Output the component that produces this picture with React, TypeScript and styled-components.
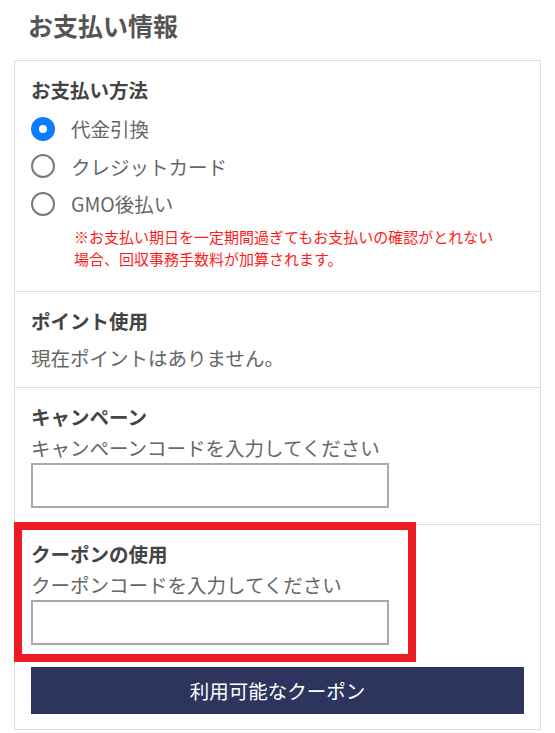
import React, { useState } from 'react';
import styled, { createGlobalStyle } from 'styled-components';

const GlobalStyle = createGlobalStyle`
    body {
        margin: 0;
        background: #ffffff;
        font-family: "Noto Sans CJK JP", "Noto Sans", sans-serif;
    }
`;

const methods = ['代金引換', 'クレジットカード', 'GMO後払い'];

export default function App() {
    const [method, setMethod] = useState(0);

    return (
        <React.Fragment>
            <GlobalStyle />
            <Page>
                <Title>お支払い情報</Title>
                <Box>
                    <Section>
                        <Heading $gap={6}>お支払い方法</Heading>
                        {methods.map((label, i) => (
                            <RadioRow key={label} onClick={() => setMethod(i)}>
                                <RadioCircle $checked={method === i} />
                                <RadioLabel>{label}</RadioLabel>
                            </RadioRow>
                        ))}
                        <Note>
                            ※お支払い期日を一定期間過ぎてもお支払いの確認がとれない<br />
                            場合、回収事務手数料が加算されます。
                        </Note>
                    </Section>
                    <Section>
                        <Heading $gap={9}>ポイント使用</Heading>
                        <Text>現在ポイントはありません。</Text>
                    </Section>
                    <Section $bottom={16}>
                        <Heading>キャンペーン</Heading>
                        <Text $gap={1}>キャンペーンコードを入力してください</Text>
                        <CodeInput />
                    </Section>
                    <Section $last>
                        <Highlight />
                        <Heading>クーポンの使用</Heading>
                        <Text $gap={1}>クーポンコードを入力してください</Text>
                        <CodeInput />
                        <CouponButton>利用可能なクーポン</CouponButton>
                    </Section>
                </Box>
            </Page>
        </React.Fragment>
    );
}

const Page = styled.div`
    padding: 0 14px;
`;

const Title = styled.h1`
    margin: 0 0 10px;
    padding-left: 14px;
    font-size: 25px;
    line-height: 50px;
    font-weight: 700;
    color: #555555;
`;

const Box = styled.div`
    border: 1px solid #dddddd;
`;

const Section = styled.div<{ $last?: boolean; $bottom?: number }>`
    position: relative;
    padding: 15px 16px ${p => p.$bottom ?? 15}px;
    border-bottom: ${p => (p.$last ? 'none' : '1px solid #dddddd')};
`;

const Heading = styled.div<{ $gap?: number }>`
    font-size: 19.5px;
    line-height: 28px;
    font-weight: 700;
    color: #444444;
    margin-bottom: ${p => p.$gap ?? 3}px;
`;

const Text = styled.div<{ $gap?: number }>`
    font-size: 19.5px;
    line-height: 28px;
    color: #666666;
    margin-bottom: ${p => p.$gap ?? 0}px;
`;

const RadioRow = styled.label`
    display: flex;
    align-items: center;
    gap: 16px;
    height: 37.5px;
    cursor: pointer;
`;

const RadioCircle = styled.span<{ $checked: boolean }>`
    box-sizing: border-box;
    width: 24px;
    height: 24px;
    border-radius: 50%;
    display: flex;
    align-items: center;
    justify-content: center;
    background: ${p => (p.$checked ? '#0a7cff' : '#ffffff')};
    border: ${p => (p.$checked ? 'none' : '2px solid #7a7a7a')};

    &::after {
        content: '';
        display: ${p => (p.$checked ? 'block' : 'none')};
        width: 8px;
        height: 8px;
        border-radius: 50%;
        background: #ffffff;
    }
`;

const RadioLabel = styled.span`
    font-size: 19.5px;
    color: #666666;
`;

const Note = styled.p`
    margin: 3px 0 6px 43px;
    font-size: 15px;
    line-height: 22px;
    color: #ff1a1a;
`;

const CodeInput = styled.input`
    display: block;
    box-sizing: border-box;
    width: 358px;
    height: 45px;
    margin: 0;
    padding: 0 8px;
    border: 2px solid #a9a9a9;
    border-radius: 0;
    font-size: 18px;
    outline: none;
`;

const CouponButton = styled.button`
    display: block;
    width: 100%;
    height: 47px;
    margin-top: 22px;
    border: none;
    background: #2d355e;
    color: #ffffff;
    font-family: "Noto Sans CJK JP", "Noto Sans", sans-serif;
    font-size: 19.5px;
    cursor: pointer;
`;

const Highlight = styled.div`
    position: absolute;
    left: -1px;
    top: -3px;
    width: 402px;
    height: 140px;
    box-sizing: border-box;
    border: 8px solid #ed1c24;
    pointer-events: none;
`;
